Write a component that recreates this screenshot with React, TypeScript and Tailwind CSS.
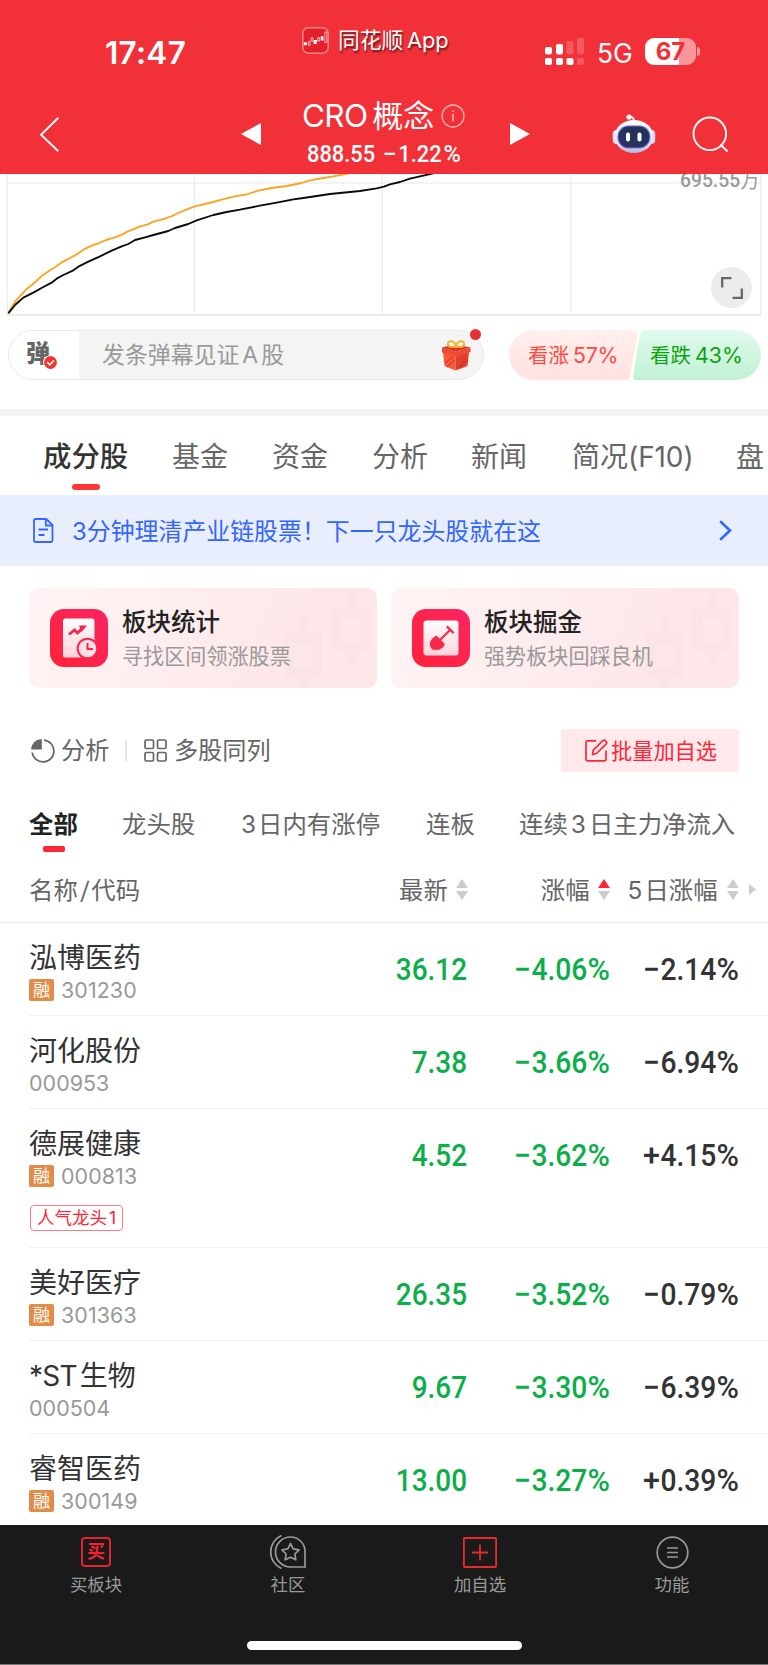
import React from "react";

type Stock = {
  name: string;
  code: string;
  margin: boolean;
  price: string;
  change: string;
  fiveDay: string;
  label?: string;
};

const stocks: Stock[] = [
  { name: "泓博医药", code: "301230", margin: true, price: "36.12", change: "−4.06%", fiveDay: "−2.14%" },
  { name: "河化股份", code: "000953", margin: false, price: "7.38", change: "−3.66%", fiveDay: "−6.94%" },
  { name: "德展健康", code: "000813", margin: true, price: "4.52", change: "−3.62%", fiveDay: "+4.15%", label: "人气龙头1" },
  { name: "美好医疗", code: "301363", margin: true, price: "26.35", change: "−3.52%", fiveDay: "−0.79%" },
  { name: "*ST生物", code: "000504", margin: false, price: "9.67", change: "−3.30%", fiveDay: "−6.39%" },
  { name: "睿智医药", code: "300149", margin: true, price: "13.00", change: "−3.27%", fiveDay: "+0.39%" },
];

function StatusBar() {
  return (
    <div className="flex h-[92px] items-start">
      <div className="ml-[105px] mt-[35px] w-[197px] text-[31.5px] font-semibold leading-[36px] tracking-[0.3px]">17:47</div>
      <div className="mt-[27px] flex w-[243px] items-center">
        <svg width="27" height="27" viewBox="0 0 27 27" fill="none">
          <rect x="0.8" y="0.8" width="25.4" height="25.4" rx="5.5" fill="#e5202a" stroke="#f8878b" strokeWidth="1.5" />
          <path d="M1.8 15.2h3v3h-3zM11.6 13h3.2v4h-3.2zM18.8 9.2h2.6v4.2h-2.6z" fill="#fff" />
          <path d="M6.2 15h2v3h-2zM7.2 13.6V15M7.2 18v1.2M9 11.3h2v3H9zM10 9.8v1.5M15.6 11h2v2.6h-2zM16.6 9.8V11M16.6 13.6V15M22.8 5.5h2v10h-2zM23.8 4v1.5" stroke="#fff" strokeWidth="0.6" />
        </svg>
        <span className="ml-[9px] text-[21.8px] leading-[27px] tracking-[-0.1px] [text-shadow:1px_2px_2px_rgba(0,0,0,0.6)]">
          同花顺<span className="ml-[4px]">App</span>
        </span>
      </div>
      <svg className="mt-[38px]" width="39" height="27" viewBox="0 0 39 27" fill="#fff">
        <rect x="0" y="9" width="7" height="7.4" rx="1.8" />
        <rect x="11" y="6" width="7" height="10.4" rx="1.8" />
        <rect x="21.500" y="3" width="7" height="13.4" rx="1.8" opacity="0.2" />
        <rect x="32" y="0" width="7" height="16.400" rx="1.8" opacity="0.2" />
        <rect x="0" y="20" width="7" height="7" rx="1.8" />
        <rect x="11" y="20" width="7" height="7" rx="1.8" />
        <rect x="21.500" y="20" width="7" height="7" rx="1.8" />
        <rect x="32" y="20" width="7" height="7" rx="1.800" opacity="0.2" />
      </svg>
      <div className="ml-[13px] mt-[38px] w-[48px] text-[26.4px] leading-[31px]">5G</div>
      <div className="mt-[38px] flex items-center">
        <div className="flex h-[27px] w-[51px] items-center justify-center rounded-[9px] bg-[linear-gradient(90deg,#fff_67%,#f9979b_67%)] text-[24px] font-bold leading-[27px] text-[#f23038]">67</div>
        <div className="ml-[1px] h-[9px] w-[3px] rounded-r-full bg-[#f9979b]" />
      </div>
    </div>
  );
}

function Robot() {
  return (
    <svg width="44" height="40" viewBox="0 0 44 40">
      <defs>
        <linearGradient id="shell" x1="0" y1="0" x2="0" y2="1">
          <stop offset="0" stopColor="#ffffff" />
          <stop offset="0.75" stopColor="#dedff2" />
          <stop offset="1" stopColor="#b4b2da" />
        </linearGradient>
        <linearGradient id="rim" x1="0" y1="0" x2="1" y2="0.4">
          <stop offset="0" stopColor="#4a7df0" />
          <stop offset="0.5" stopColor="#8d57dd" />
          <stop offset="1" stopColor="#6e8cf5" />
        </linearGradient>
      </defs>
      <path d="M22 7c0-3-1.500-4-4-4" fill="none" stroke="#e8e6f4" strokeWidth="2" />
      <circle cx="17" cy="3" r="2.600" fill="#fff" />
      <rect x="0.700" y="16" width="8" height="14" rx="4" fill="#e8e5f7" />
      <rect x="35.300" y="16" width="8" height="14" rx="4" fill="#d9d0f4" />
      <ellipse cx="22" cy="22.500" rx="19.500" ry="16.500" fill="url(#shell)" />
      <rect x="5.500" y="11.500" width="33" height="23" rx="11" fill="url(#rim)" />
      <rect x="6.500" y="12.500" width="31" height="21" rx="10" fill="#27325c" />
      <rect x="14" y="18.500" width="4" height="9" rx="2" fill="#fff" />
      <rect x="25.500" y="18.500" width="4" height="9" rx="2" fill="#fff" />
    </svg>
  );
}

function NavBar() {
  return (
    <div className="flex h-[82px] items-start">
      <svg className="ml-[39px] mt-[24px]" width="21" height="37" viewBox="0 0 21 37" fill="none">
        <path d="M19.300 1.700 2 18.700 19.300 35.300" stroke="#fff" strokeWidth="1.900" />
      </svg>
      <svg className="ml-[180px] mt-[30px]" width="22" height="24" viewBox="0 0 22 24"><path d="M21 1v22L1 12z" fill="#fff" /></svg>
      <div className="ml-[40px] w-[184px]">
        <div className="flex h-[47px] items-center">
          <span className="text-[31.5px] leading-[46px] tracking-[-0.7px]">CRO</span>
          <span className="ml-[5px] text-[31px] leading-[46px]">概念</span>
          <svg className="ml-[7px]" width="24" height="24" viewBox="0 0 24 24" fill="none" stroke="#fbb3b6" strokeWidth="1.300">
            <circle cx="12" cy="12" r="11" />
            <path d="M12 10v7.500M12 6.200v1.800" strokeWidth="1.600" />
          </svg>
        </div>
        <div className="ml-[5px] mt-[1px] flex w-max origin-left scale-x-[0.91] whitespace-pre font-[Roboto] text-[24px] font-medium leading-[28px]">
          <span>888.55 </span>
          <span className="ml-[2px] mr-[4px] inline-block origin-left scale-x-[1.15]">−</span>
          <span>1.22</span>
          <span className="ml-[2px] inline-block origin-left scale-x-[1.08]">%</span>
        </div>
      </div>
      <svg className="ml-[23px] mt-[30px]" width="22" height="24" viewBox="0 0 22 24"><path d="M1 1v22l20-11z" fill="#fff" /></svg>
      <div className="ml-[81px] mt-[22px]"><Robot /></div>
      <svg className="ml-[36px] mt-[24px]" width="37" height="37" viewBox="0 0 37 37" fill="none" stroke="#fff" strokeWidth="1.900">
        <circle cx="17.800" cy="17.800" r="16.300" />
        <path d="m28.500 28.500 7 7" />
      </svg>
    </div>
  );
}

function Chart() {
  return (
    <div className="relative h-[142px] overflow-hidden">
      <svg width="768" height="142" viewBox="0 12 2304 426" fill="none">
        <path d="M22 39H2282" stroke="#efefef" strokeWidth="5" />
        <path d="M22 12V434M583 12V434M1147 12V434M1712 12V434M2282 12V434" stroke="#ececec" strokeWidth="4" />
        <path d="M20 434.500H2284" stroke="#e8e8e8" strokeWidth="5" />
        <polyline stroke="#fba41f" strokeWidth="5.500" strokeLinejoin="round" points="25,428 45,395 80,357 107,335 125,318 150,301 165,292 185,277 210,264 235,250 250,239 268,230 295,220 318,210 345,202 368,193 382,185 400,178 418,170 443,163 460,155 485,149 512,140 535,129 560,118 585,109 615,102 640,96 665,89 705,79 740,73 775,62 815,54 860,48 905,39 930,31 970,24 1000,19 1047,10" />
        <polyline stroke="#0a0a0a" strokeWidth="5.500" strokeLinejoin="round" points="25,430 45,405 70,383 100,368 130,351 155,338 170,326 190,315 220,301 235,290 265,275 300,259 335,242 365,229 385,222 405,210 435,202 460,195 505,183 525,174 565,162 590,151 640,135 680,126 720,119 780,107 830,98 880,88 910,84 950,78 990,72 1080,63 1130,55 1152,50 1170,43 1200,36 1230,26 1260,19 1300,10" />
      </svg>
      <div className="absolute right-[8px] top-[-8px] origin-right scale-x-[0.92] font-[Roboto,'Noto_Sans_CJK_SC',sans-serif] text-[21px] font-medium leading-[28px] text-[#999]">695.55<span className="font-normal">万</span></div>
      <div className="absolute left-[711px] top-[93px] flex size-[41px] items-center justify-center rounded-full bg-[#ececec]">
        <svg width="22" height="22" viewBox="0 0 22 22" fill="none" stroke="#666" strokeWidth="2.300">
          <path d="M1.200 10.500V1.200h9.300M20.800 11.500v9.300h-9.300" />
        </svg>
      </div>
    </div>
  );
}

function Gift() {
  return (
    <svg width="30" height="32" viewBox="0 0 30 32">
      <path d="M2 13 14.500 17v14.500L3.500 27z" fill="#f4593a" />
      <path d="M14.500 17 28 13l-1.500 14-12 4.500z" fill="#e5402e" />
      <path d="M1 8.500 14.500 12.500v5L1 13.500zM14.500 12.500 29.500 8.500v4.500l-15 4.500z" fill="#ee4a34" />
      <path d="m1 8.500 13-3 15.500 3-15 4z" fill="#d62f25" />
      <path d="m4 24 8-6M6 28l8-7M16 29l9-10M19 28l7-6" stroke="#cc3023" strokeWidth="1" />
      <path d="M15 7C10 9 6.500 8 7 4.500S13 1 15 7c2-6 7.500-6 8-2.500S20 9 15 7z" fill="#fff5e0" stroke="#f2b233" strokeWidth="2" />
    </svg>
  );
}

function BarrageRow() {
  return (
    <div className="flex h-[93px] items-start pl-[8px] pt-[14px]">
      <div className="relative flex h-[50px] w-[476px] items-center rounded-full border-[1.5px] border-[#e9e9e9] bg-[#f4f4f4]">
        <div className="relative flex h-full w-[70px] items-center rounded-l-full bg-white pl-[17px]">
          <span className="mt-[-3px] text-[24px] font-black leading-[30px] text-[#666]">弹</span>
          <svg className="absolute left-[34px] top-[24px]" width="15" height="15" viewBox="0 0 15 15">
            <circle cx="7.500" cy="7.500" r="7.300" fill="#fff" />
            <circle cx="7.500" cy="7.500" r="6.400" fill="#f5352f" />
            <path d="m4.200 7.300 2.500 2.500 4.300-4.300" fill="none" stroke="#fff" strokeWidth="1.600" />
          </svg>
        </div>
        <span className="ml-[23px] w-[339px] text-[22.900px] leading-[30px] text-[#999]">发条弹幕见证<span className="mx-[3px]">A</span>股</span>
        <Gift />
        <div className="absolute right-[2px] top-[-2px] size-[11px] rounded-full bg-[#e83032]" />
      </div>
      <div className="relative ml-[25px] flex h-[50px] w-[252px] items-center text-[20.5px]">
        <svg className="absolute inset-0" width="252" height="50" viewBox="0 0 252 50">
          <defs>
            <linearGradient id="up" x1="0" y1="0" x2="0" y2="1"><stop offset="0" stopColor="#ffefee" /><stop offset="1" stopColor="#ffe1de" /></linearGradient>
            <linearGradient id="down" x1="0" y1="0" x2="0" y2="1"><stop offset="0" stopColor="#e1faed" /><stop offset="1" stopColor="#c0f1d5" /></linearGradient>
          </defs>
          <path d="M25 0h100q4 0 3.500 4L121 46q-.700 4-4.500 4H25A25 25 0 0 1 25 0z" fill="url(#up)" />
          <path d="M135.500 0H227a25 25 0 0 1 0 50H127.500q-4 0-3.300-4L131 4q.700-4 4.500-4z" fill="url(#down)" />
        </svg>
        <span className="relative ml-[19px] mt-[1px] w-[122px] text-[#fd4a43]">看涨<span className="ml-[4px] text-[21.300px] tracking-[-0.2px]">57%</span></span>
        <span className="relative mt-[1px] text-[#0ea30e]">看跌<span className="ml-[4px] text-[21.300px] tracking-[0.1px]">43%</span></span>
      </div>
    </div>
  );
}

function Tabs() {
  return (
    <div className="flex h-[79px] items-start overflow-hidden whitespace-nowrap pl-[43px] pt-[21px] text-[28px] leading-[40px] text-[#666]">
      <div className="flex w-[129px] shrink-0 flex-col text-[28.400px] font-medium text-[#333]">
        <span>成分股</span>
        <span className="ml-[29px] mt-[7px] h-[6px] w-[28px] rounded-full bg-[#ff3732]" />
      </div>
      <span className="w-[100px] shrink-0">基金</span>
      <span className="w-[100px] shrink-0">资金</span>
      <span className="w-[99px] shrink-0">分析</span>
      <span className="w-[101px] shrink-0">新闻</span>
      <span className="w-[164px] shrink-0">简况<span className="tracking-[-0.1px]">(F10)</span></span>
      <span>盘</span>
    </div>
  );
}

function Banner() {
  return (
    <div className="flex h-[71px] items-center bg-[#e9eeff] text-[#3366ff]">
      <svg className="ml-[33px]" width="21" height="25" viewBox="0 0 21 25" fill="none" stroke="currentColor" strokeWidth="1.800" strokeLinejoin="round">
        <path d="M2.500 1h10.800L19.500 7v15.500a1.500 1.500 0 0 1-1.500 1.500H2.500A1.500 1.500 0 0 1 1 22.500v-20A1.500 1.500 0 0 1 2.500 1z" />
        <path d="M12.800 1.200v6.300h6.500M5.500 11.500h9.500M5.500 17h6" />
      </svg>
      <span className="ml-[18px] mt-[2px] w-[611px] text-[23.920px] leading-[36px]">3分钟理清产业链股票！下一只龙头股就在这</span>
      <svg className="ml-[36px]" width="13" height="21" viewBox="0 0 13 21" fill="none" stroke="currentColor" strokeWidth="2.600"><path d="m1.200 1.200 9.800 9.300-9.800 9.300" /></svg>
    </div>
  );
}

function Candles() {
  return (
    <svg className="absolute right-0 top-0" width="98" height="99" viewBox="0 0 98 99" fill="none">
      <g fill="#fadde0" opacity="0.450">
        <path d="M67 4h9v15.500h14.500v44H76V78h-9V63.500H52.700v-44H67zM62 30v23.500h19V30z" fillRule="evenodd" />
      </g>
      <g fill="#fadde0" opacity="0.300">
        <path d="M19.500 29h9v15.500H43v44H28.500V99h-9V88.500H5v-44h14.500zM14.500 55v23.500h19V55z" fillRule="evenodd" />
      </g>
    </svg>
  );
}

function FeatureCard({ title, sub, children }: { title: string; sub: string; children: React.ReactNode }) {
  return (
    <div className="relative flex h-[100px] w-[348px] items-start rounded-[10px] bg-[linear-gradient(115deg,#fff4f5,#fde7e9_75%)]">
      <Candles />
      <div className="ml-[21px] mt-[21px] size-[58px] rounded-[14px] bg-[linear-gradient(45deg,#ff2238,#fb2562)]">{children}</div>
      <div className="relative ml-[14px] mt-[16px] flex flex-col">
        <span className="text-[24.5px] font-medium leading-[36px] text-[#222]">{title}</span>
        <span className="text-[21.100px] leading-[33px] text-[#999]">{sub}</span>
      </div>
    </div>
  );
}

function FeatureCards() {
  return (
    <div className="flex h-[141px] gap-[14px] pl-[29px] pt-[22px]">
      <FeatureCard title="板块统计" sub="寻找区间领涨股票">
        <svg width="58" height="58" viewBox="0 0 58 58">
          <defs><linearGradient id="page" x1="0" y1="0" x2="0" y2="1"><stop stopColor="#fff" /><stop offset="1" stopColor="#ffd3db" /></linearGradient></defs>
          <rect x="13" y="9.500" width="31.500" height="39" rx="2.500" fill="url(#page)" />
          <path d="m19 25.500 5.500-4.500 3 3 6-6" fill="none" stroke="#fb2450" strokeWidth="2.800" />
          <path d="M29 16.500h8l-5.500 6.500z" fill="#fb2450" />
          <circle cx="37.500" cy="39.500" r="10.800" fill="#fb2450" />
          <circle cx="37.500" cy="39.500" r="8.800" fill="#ffe0e5" />
          <path d="M37.500 34v6h5.500" fill="none" stroke="#fb2450" strokeWidth="2" />
        </svg>
      </FeatureCard>
      <FeatureCard title="板块掘金" sub="强势板块回踩良机">
        <svg width="58" height="58" viewBox="0 0 58 58">
          <rect x="11.500" y="11.500" width="35" height="35" rx="3" fill="url(#page)" />
          <path d="M28 31 38.500 20.500" stroke="#f92748" strokeWidth="2.200" />
          <path d="m35.500 18 5.500 5.500" stroke="#f92748" strokeWidth="2.400" strokeLinecap="round" />
          <path d="m24.500 26.500 8 8c.500 3-3.500 6-7 6.500l-5.500-.500-2-3.500c-.500-4 1-7 3.500-8.500z" fill="#f92748" />
        </svg>
      </FeatureCard>
    </div>
  );
}

function Toolbar() {
  return (
    <div className="flex h-[43px] items-center text-[24.2px] leading-[36px] text-[#666]">
      <svg className="ml-[31px]" width="24" height="24" viewBox="0 0 24 24" fill="none">
        <path d="M13 1.200A10.900 10.900 0 1 1 1.200 13.500" stroke="#666" strokeWidth="1.700" />
        <path d="M10.800 0v10.500H0A10.800 10.800 0 0 1 10.800 0z" fill="#666" />
      </svg>
      <span className="ml-[6px]">分析</span>
      <span className="ml-[16px] h-[21px] w-[1.5px] bg-[#e6e6e6]" />
      <svg className="ml-[17px]" width="23" height="23" viewBox="0 0 23 23" fill="none" stroke="#666" strokeWidth="1.700">
        <rect x="1" y="1" width="8.500" height="8.500" rx="1.200" />
        <rect x="13.500" y="1" width="8.500" height="8.500" rx="1.200" />
        <rect x="1" y="13.500" width="8.500" height="8.500" rx="1.200" />
        <rect x="13.500" y="13.500" width="8.500" height="8.500" rx="1.200" />
      </svg>
      <span className="ml-[7px]">多股同列</span>
      <div className="ml-auto mr-[29px] flex h-[43px] w-[178px] items-center rounded-[3px] bg-[#ffe9eb] pl-[24px] text-[#ff2436]">
        <svg width="23" height="23" viewBox="0 0 23 23" fill="none" stroke="currentColor" strokeWidth="1.700">
          <path d="M11 1.800H2.500A1.500 1.500 0 0 0 1 3.300v17A1.500 1.500 0 0 0 2.500 21.800h17a1.500 1.500 0 0 0 1.500-1.500V11.500" />
          <path d="m7.500 15.500.8-4.300L18 1.500q1-.8 2 0l1.300 1.300q.8 1 0 2L11.500 14.500z" strokeLinejoin="round" />
        </svg>
        <span className="ml-[3px] text-[21.2px] leading-[32px]">批量加自选</span>
      </div>
    </div>
  );
}

function Filters() {
  return (
    <div className="flex h-[85px] items-start whitespace-nowrap pl-[29px] pt-[34px] text-[24.4px] leading-[36px] text-[#666]">
      <div className="flex w-[93px] flex-col font-bold text-[#222]">
        <span>全部</span>
        <span className="ml-[14px] mt-[4px] h-[6px] w-[22px] rounded-[2px] bg-[#ff2436]" />
      </div>
      <span className="w-[119px]">龙头股</span>
      <span className="w-[185px]">3<span className="ml-[2px]">日内有涨停</span></span>
      <span className="w-[93px]">连板</span>
      <span>连续<span className="mx-[3px]">3</span>日主力净流入</span>
    </div>
  );
}

function Sort({ active = false }: { active?: boolean }) {
  return (
    <svg width="12" height="21" viewBox="0 0 12 21">
      <path d="M6 0 12 9H0z" fill={active ? "#ff2436" : "#ccc"} />
      <path d="M6 21 12 12H0z" fill="#ccc" />
    </svg>
  );
}

function TableHead() {
  return (
    <div className="flex h-[66px] items-center border-b border-[#ededed] text-[24.4px] leading-[36px] text-[#666]">
      <span className="w-[370px] pl-[29px]">名称<span className="mx-[1px] inline-block scale-x-[1.25] px-[1.5px] font-light">/</span>代码</span>
      <div className="ml-[29px] flex items-center gap-[8px]">最新<Sort /></div>
      <div className="ml-[73px] flex items-center gap-[8px]">涨幅<Sort active /></div>
      <div className="ml-[18px] flex items-center gap-[9px]"><span>5<span className="ml-[2px]">日涨幅</span></span><Sort /></div>
      <svg className="ml-[10px]" width="7" height="11" viewBox="0 0 7 11"><path d="M0 0 7 5.500 0 11z" fill="#ccc" /></svg>
    </div>
  );
}

function Percent({ value }: { value: string }) {
  return (
    <>
      <span className="mr-[0.5px] inline-block origin-right scale-x-[1.08]">{value[0]}</span>
      {value.slice(1, -1)}
      <span className="ml-[2px] inline-block origin-right scale-x-[1.08]">%</span>
    </>
  );
}

function StockRow({ stock, last }: { stock: Stock; last: boolean }) {
  return (
    <div className={last ? "ml-[29px] h-[91px]" : stock.label ? "ml-[29px] h-[139px] border-b border-[#f1f1f1]" : "ml-[29px] h-[93px] border-b border-[#f1f1f1]"}>
      <div className="flex h-[92px] items-center">
        <div className="flex w-[320px] flex-col pt-[3px]">
          <span className="text-[28px] leading-[38px] text-[#333]">
            {stock.name.startsWith("*ST") ? <><span className="mr-[3px] tracking-[-0.8px]">*ST</span>{stock.name.slice(3)}</> : stock.name}
          </span>
          <div className="flex h-[26px] items-center text-[#999]">
            {stock.margin && <span className="mr-[7px] flex h-[22px] w-[25px] items-center justify-center rounded-[2px] bg-[#e38c49] text-[17px] leading-[22px] text-white">融</span>}
            <span className={stock.margin ? "text-[21.400px] leading-[26px] tracking-[0.1px]" : "text-[21.5px] leading-[26px]"}>{stock.code}</span>
          </div>
        </div>
        <div className="mt-[2px] flex font-[Roboto] text-[31px] font-medium leading-[36px] text-[#0cae4a]">
          <span className="w-[118px] origin-right scale-x-[0.9] text-right">{stock.price}</span>
          <span className="w-[143px] origin-right scale-x-[0.91] whitespace-nowrap text-right"><Percent value={stock.change} /></span>
          <span className="w-[129px] origin-right scale-x-[0.91] whitespace-nowrap text-right text-[#333]"><Percent value={stock.fiveDay} /></span>
        </div>
      </div>
      {stock.label && (
        <div className="ml-[1px] mt-[4px] flex h-[26px] w-[93px] items-center justify-center rounded-[4px] border border-[#ff7b86] text-[17.5px] leading-[24px] text-[#ff2436]">
          人气龙头<span className="ml-[2px]">1</span>
        </div>
      )}
    </div>
  );
}

function NavItem({ label, children }: { label: string; children: React.ReactNode }) {
  return (
    <div className="flex w-[192px] flex-col items-center">
      <div className="flex h-[34px] items-center">{children}</div>
      <span className="mt-[3px] text-[17.4px] leading-[26px] text-[#999]">{label}</span>
    </div>
  );
}

function BottomBar() {
  return (
    <div className="flex h-[140px] flex-col items-center border-b border-[#777] bg-[#1a1a1a]">
      <div className="flex h-[116px] pt-[10px]">
        <NavItem label="买板块">
          <div className="flex size-[30px] items-center justify-center rounded-[4px] border-2 border-[#e8222d] text-[18px] font-bold leading-[26px] text-[#f5222d]">买</div>
        </NavItem>
        <NavItem label="社区">
          <svg width="36" height="34" viewBox="0 0 36 34" fill="none" stroke="#999" strokeWidth="1.700">
            <path d="M20.500 2a15 15 0 1 0 0 30H35V16.500A14.500 14.500 0 0 0 20.500 2z" />
            <path d="M11.500.500a18 18 0 0 0 0 33" />
            <path d="m20.500 8.500 2.700 5.300 5.800 1-4.100 4.200.9 5.800-5.300-2.600-5.300 2.600.9-5.800-4.100-4.200 5.800-1z" strokeLinejoin="round" />
          </svg>
        </NavItem>
        <NavItem label="加自选">
          <svg width="34" height="31" viewBox="0 0 34 31" fill="none" stroke="#e8282f" strokeWidth="1.800">
            <rect x="0.900" y="1" width="32.200" height="29" rx="0.800" />
            <path d="M17 7.500v16M9 15.500h16" />
          </svg>
        </NavItem>
        <NavItem label="功能">
          <svg width="33" height="33" viewBox="0 0 33 33" fill="none" stroke="#999" strokeWidth="1.700">
            <circle cx="16.500" cy="16.500" r="15.300" />
            <path d="M11 12h11M11 16.500h11M11 21h11" />
          </svg>
        </NavItem>
      </div>
      <div className="h-[9px] w-[275px] rounded-full bg-white" />
    </div>
  );
}

export default function App() {
  return (
    <div className="flex h-[1665px] w-[768px] flex-col overflow-hidden bg-white font-[Inter,'Noto_Sans_CJK_SC',sans-serif]">
      <header className="h-[174px] shrink-0 bg-[#f23038] text-white">
        <StatusBar />
        <NavBar />
      </header>
      <Chart />
      <BarrageRow />
      <div className="h-[7px] bg-[#f4f4f4]" />
      <Tabs />
      <Banner />
      <FeatureCards />
      <div className="mt-[22px]"><Toolbar /></div>
      <Filters />
      <TableHead />
      <main className="min-h-0 flex-1 overflow-hidden">
        {stocks.map((stock, i) => <StockRow key={stock.code} stock={stock} last={i === stocks.length - 1} />)}
      </main>
      <BottomBar />
    </div>
  );
}
